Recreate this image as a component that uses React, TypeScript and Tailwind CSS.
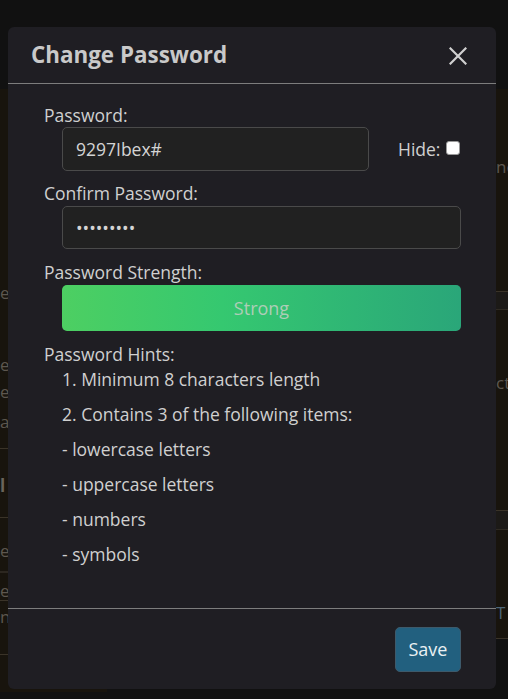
import React from "react";

const HINTS = [
  "1. Minimum 8 characters length",
  "2. Contains 3 of the following items:",
  "- lowercase letters",
  "- uppercase letters",
  "- numbers",
  "- symbols",
];

function Backdrop() {
  return (
    <div className="min-h-[699px] bg-[#111111] pt-[89px] flex text-[17px] leading-[22px] text-[#5d574f]">
      {/* left column of the dimmed page */}
      <div className="w-[107px] h-[603px] bg-[#18140d] flex flex-col">
        <div className="mt-[193px]">e</div>
        <div className="mt-[50px]">e</div>
        <div className="mt-[5px]">e</div>
        <div className="mt-[8px]">ay</div>
        <div className="mt-[15px] border-t border-[#3a3328]" />
        <div className="mt-[26px] font-bold text-[#6a645b]">l</div>
        <div className="mt-[20px] border-t border-[#3a3328]" />
        <div className="mt-[22px]">er</div>
        <div className="mt-[9px] border-t-2 border-[#2c2720]" />
        <div className="mt-[9px] leading-[18px]">er</div>
        <div className="border-t border-[#3a3328]" />
        <div className="mt-[6px] leading-[20px]">n</div>
        <div className="mt-[27px] border-t border-[#3a3328]" />
      </div>
      <div className="flex-1" />
      {/* right column of the dimmed page */}
      <div className="w-[12px] overflow-hidden flex flex-col">
        <div className="h-[202px] bg-[#18140d] pt-[67px] whitespace-nowrap">ne</div>
        <div className="h-[18px] bg-[#1c1a17] border-t border-[#3a3328]" />
        <div className="h-[201px] bg-[#18140d] border-t border-[#2f2a22] pt-[62px] whitespace-nowrap">ct</div>
        <div className="h-[19px] bg-[#1c1a17] border-t border-[#3a3328]" />
        <div className="h-[109px] bg-[#18140d] border-t border-[#2f2a22] pt-[72px] text-[#4d6576]">T</div>
        <div className="border-t border-[#3a3328]" />
      </div>
    </div>
  );
}

export default function App() {
  return (
    <div className="relative w-[508px] h-[699px] overflow-hidden font-['Open_Sans',sans-serif]">
      <Backdrop />

      <div className="absolute left-[8px] top-[27px] w-[488px] h-[662px] rounded-[6px] bg-[#1f1e23] flex flex-col">
        <div className="h-[57px] border-b border-[#7d7d7d] flex items-center justify-between pl-[23px] pr-[29px]">
          <h2 className="text-[22.4px] font-bold text-[#c9c9c9] leading-none">Change Password</h2>
          <svg width="18" height="18" viewBox="0 0 18 18" className="mt-[1px]">
            <path d="M1.5 1.5 L16.5 16.5 M16.5 1.5 L1.5 16.5" stroke="#d0d0d0" strokeWidth="2.2" strokeLinecap="square" />
          </svg>
        </div>

        <div className="flex-1 pl-[36px] pr-[35px] pt-[20px] text-[17.5px] leading-[23px] text-[#d0d0d0]">
          <div>Password:</div>
          <div className="flex items-center">
            <input
              type="text"
              readOnly
              value="9297Ibex#"
              className="ml-[18px] w-[307px] h-[44px] rounded-[5px] border border-[#4a4a4a] bg-[#212121] px-[13px] text-[17.5px] text-[#d4d4d4] outline-none"
            />
            <span className="ml-[29px]">Hide:</span>
            <input
              type="checkbox"
              readOnly
              className="ml-[6px] mb-[3px] w-[14px] h-[14px] appearance-none rounded-[3px] border border-[#9a9a9a] bg-white"
            />
          </div>

          <div className="mt-[11px]">Confirm Password:</div>
          <input
            type="password"
            readOnly
            value="abcdefghi"
            className="mt-[1px] ml-[18px] w-[399px] h-[43px] rounded-[5px] border border-[#4a4a4a] bg-[#212121] px-[13px] text-[17.5px] text-[#d4d4d4] outline-none block"
          />

          <div className="mt-[12px]">Password Strength:</div>
          <div className="mt-[1px] ml-[18px] w-[399px] h-[46px] rounded-[5px] bg-[linear-gradient(90deg,#4dcf62,#35c870_40%,#2aa679)] flex items-center justify-center text-[18px] text-[#aecdb7]">
            Strong
          </div>

          <div className="mt-[12px]">Password Hints:</div>
          <div className="ml-[18px] flex flex-col gap-[12px] mt-[2px]">
            {HINTS.map((h) => (
              <div key={h}>{h}</div>
            ))}
          </div>
        </div>

        <div className="h-[81px] border-t border-[#7d7d7d] flex items-center justify-end pr-[35px]">
          <button className="w-[66px] h-[45px] rounded-[5px] border border-[#3d5a6b] bg-[#22607f] text-[18px] text-[#eaf0f3]">
            Save
          </button>
        </div>
      </div>
    </div>
  );
}
